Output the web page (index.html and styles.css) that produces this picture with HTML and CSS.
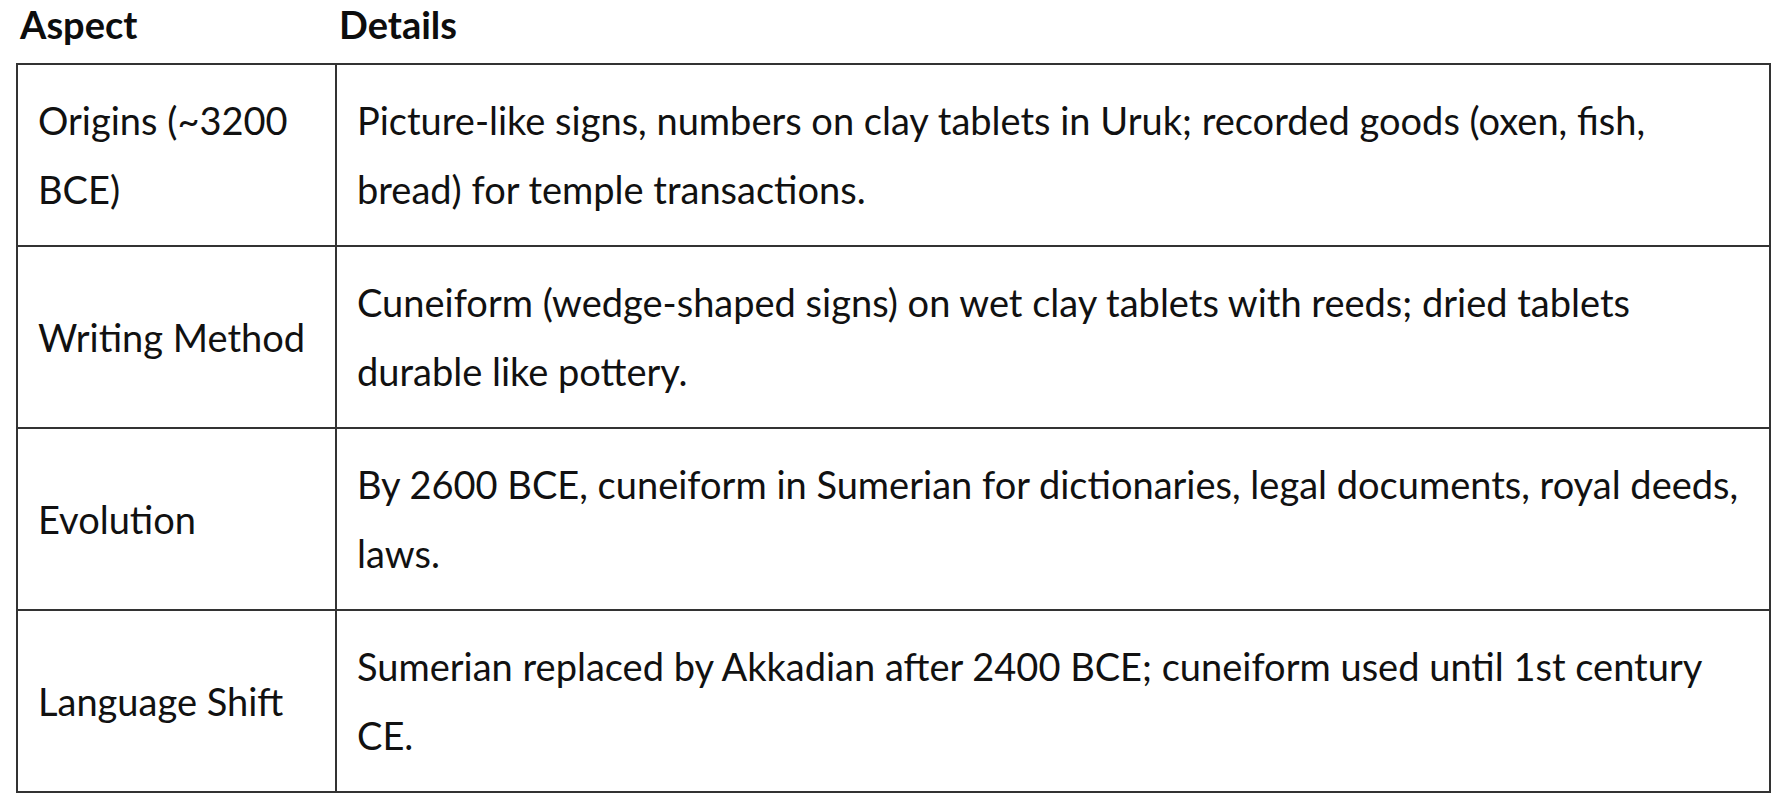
FILE: index.html
```html
<!DOCTYPE html>
<html lang="en">
<head>
<meta charset="utf-8">
<title>Sumerian Writing</title>
<link rel="stylesheet" href="styles.css">
</head>
<body>
<table class="facts">
  <colgroup>
    <col class="col-aspect">
    <col class="col-details">
  </colgroup>
  <thead>
    <tr>
      <th>Aspect</th>
      <th>Details</th>
    </tr>
  </thead>
  <tbody>
    <tr>
      <td>Origins (~3200 BCE)</td>
      <td>Picture-like signs, numbers on clay tablets in Uruk; recorded goods (oxen, fish, bread) for temple transactions.</td>
    </tr>
    <tr>
      <td>Writing Method</td>
      <td>Cuneiform (wedge-shaped signs) on wet clay tablets with reeds; dried tablets durable like pottery.</td>
    </tr>
    <tr>
      <td>Evolution</td>
      <td>By 2600 BCE, cuneiform in Sumerian for dictionaries, legal documents, royal deeds, laws.</td>
    </tr>
    <tr>
      <td>Language Shift</td>
      <td>Sumerian replaced by Akkadian after 2400 BCE; cuneiform used until 1st century CE.</td>
    </tr>
  </tbody>
</table>
</body>
</html>
```
FILE: styles.css
```css
html, body {
  margin: 0;
  padding: 0;
  background: #ffffff;
}

body {
  font-family: Lato, "Open Sans", "Liberation Sans", sans-serif;
  color: #111111;
  font-size: 38px;
}

.facts {
  margin-left: 16px;
  border-collapse: collapse;
  table-layout: fixed;
  width: 1753px;
}

.col-aspect {
  width: 319px;
}

.col-details {
  width: 1434px;
}

.facts th {
  text-align: left;
  font-weight: 700;
  line-height: 44px;
  padding: 2px 3px 17px;
  color: #0d0d0d;
}

.facts td {
  border: 2px solid #333333;
  padding: 21px 20px;
  line-height: 69px;
  vertical-align: middle;
  font-weight: 400;
}
```
